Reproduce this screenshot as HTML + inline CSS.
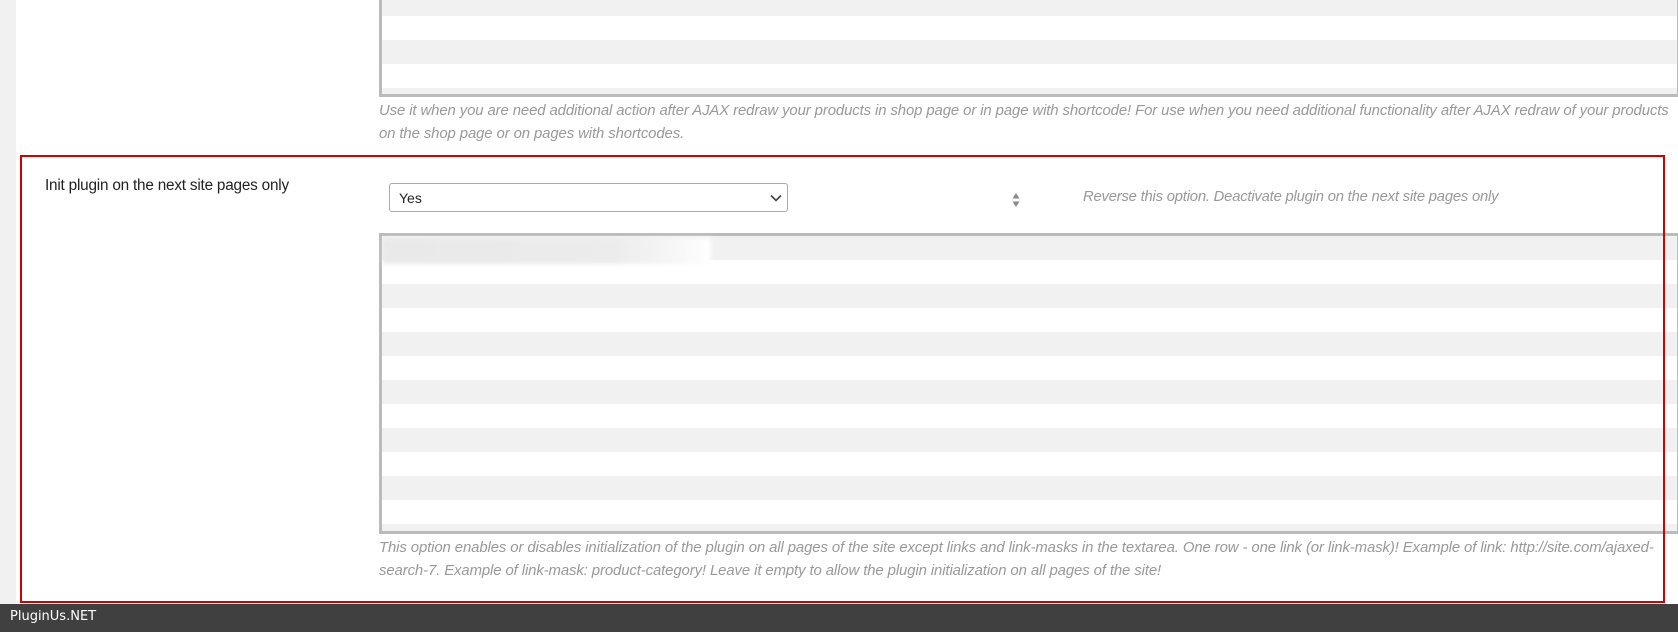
<!DOCTYPE html>
<html><head><style>
body{margin:0;width:1678px;height:632px;overflow:hidden;background:#fff;font-family:"Liberation Sans",sans-serif;position:relative}
.abs{position:absolute}
.ta{position:absolute;box-sizing:border-box;border:3px solid #bbb;border-right:1px solid #bbb;border-bottom:3px solid #bbb;
background:repeating-linear-gradient(to bottom,#f1f1f1 0,#f1f1f1 24px,#fff 24px,#fff 48px)}
.desc{position:absolute;left:379px;font-style:italic;color:#999;font-size:14.9px;line-height:23px;white-space:nowrap;letter-spacing:-0.1px}
</style></head><body>
<div class="abs" style="left:0;top:0;width:16px;height:604px;background:#f1f1f1"></div>
<div class="ta" style="left:379px;top:-3px;width:1299px;height:100px;background:repeating-linear-gradient(to bottom,#fff 0,#fff 24px,#f1f1f1 24px,#f1f1f1 48px);background-position:0 16px"></div>
<div class="desc" style="top:100px">Use it when you are need additional action after AJAX redraw your products in shop page or in page with shortcode! For use when you need additional functionality after AJAX redraw of your products<br>on the shop page or on pages with shortcodes.</div>

<div class="ta" style="left:379px;top:233px;width:1299px;height:301px"></div>
<div class="abs" style="left:383px;top:238px;width:328px;height:26px;background:linear-gradient(to right,#e9e9e9,#ececec 70%,#f6f6f6 88%,#fff);filter:blur(2px)"></div>

<div class="abs" style="left:20px;top:155px;width:1641px;height:444px;border:2px solid #d40000"></div>

<div class="abs" style="left:45px;top:177px;font-size:15.3px;color:#222;letter-spacing:-0.2px">Init plugin on the next site pages only</div>
<div class="abs" style="left:389px;top:183px;width:399px;height:29px;box-sizing:border-box;border:1px solid #aaa;border-radius:3px;background:#fff">
<span class="abs" style="left:9px;top:6px;font-size:14px;color:#222">Yes</span>
<svg class="abs" style="left:380px;top:10px" width="12" height="8" viewBox="0 0 12 8"><path d="M1 1.5 L6 6.5 L11 1.5" fill="none" stroke="#444" stroke-width="1.6"/></svg>
</div>
<svg class="abs" style="left:1011px;top:192px" width="10" height="16" viewBox="0 0 10 16"><path d="M5 1 L8.5 6.5 H1.5Z M5 15 L8.5 9.5 H1.5Z" fill="#888"/></svg>
<div class="abs" style="left:1083px;top:189px;font-size:14.8px;font-style:italic;color:#999;letter-spacing:-0.2px">Reverse this option. Deactivate plugin on the next site pages only</div>

<div class="desc" style="top:537px">This option enables or disables initialization of the plugin on all pages of the site except links and link-masks in the textarea. One row - one link (or link-mask)! Example of link: http://site.com/ajaxed-<br>search-7. Example of link-mask: product-category! Leave it empty to allow the plugin initialization on all pages of the site!</div>

<div class="abs" style="left:0;top:604px;width:1678px;height:28px;background:#404040"></div>
<div class="abs" style="left:10px;top:609px;font-family:'DejaVu Sans',sans-serif;font-size:13px;color:#fff">PluginUs.NET</div>
</body></html>
